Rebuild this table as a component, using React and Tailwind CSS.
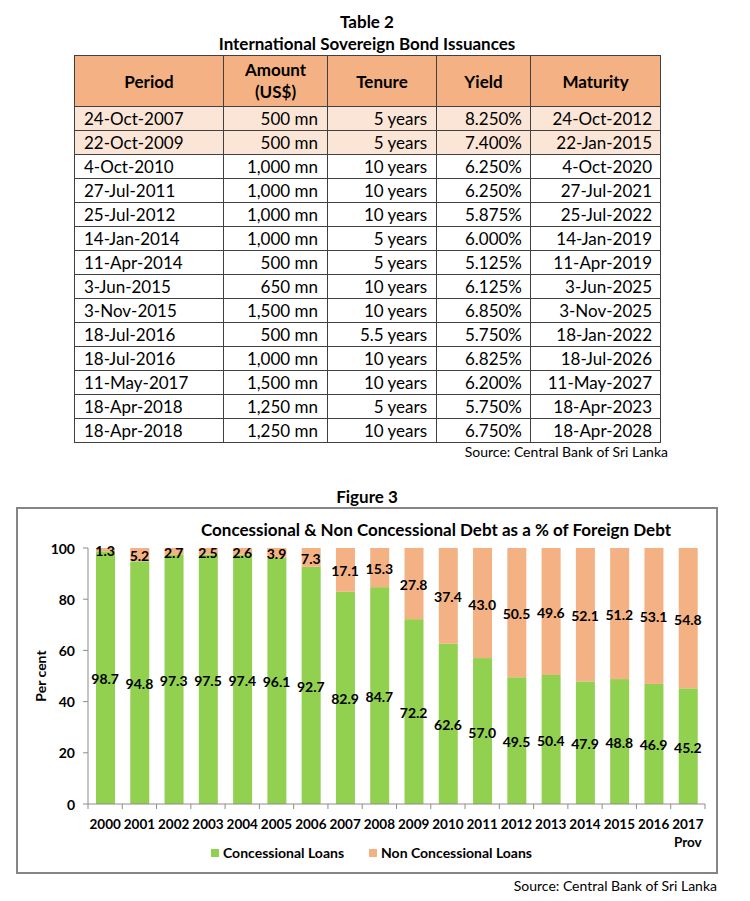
import React from "react";

const rows = [
  ["24-Oct-2007", "500 mn", "5 years", "8.250%", "24-Oct-2012", true],
  ["22-Oct-2009", "500 mn", "5 years", "7.400%", "22-Jan-2015", true],
  ["4-Oct-2010", "1,000 mn", "10 years", "6.250%", "4-Oct-2020"],
  ["27-Jul-2011", "1,000 mn", "10 years", "6.250%", "27-Jul-2021"],
  ["25-Jul-2012", "1,000 mn", "10 years", "5.875%", "25-Jul-2022"],
  ["14-Jan-2014", "1,000 mn", "5 years", "6.000%", "14-Jan-2019"],
  ["11-Apr-2014", "500 mn", "5 years", "5.125%", "11-Apr-2019"],
  ["3-Jun-2015", "650 mn", "10 years", "6.125%", "3-Jun-2025"],
  ["3-Nov-2015", "1,500 mn", "10 years", "6.850%", "3-Nov-2025"],
  ["18-Jul-2016", "500 mn", "5.5 years", "5.750%", "18-Jan-2022"],
  ["18-Jul-2016", "1,000 mn", "10 years", "6.825%", "18-Jul-2026"],
  ["11-May-2017", "1,500 mn", "10 years", "6.200%", "11-May-2027"],
  ["18-Apr-2018", "1,250 mn", "5 years", "5.750%", "18-Apr-2023"],
  ["18-Apr-2018", "1,250 mn", "10 years", "6.750%", "18-Apr-2028"],
];

const bars = [
  ["2000", "98.7", "1.3"],
  ["2001", "94.8", "5.2"],
  ["2002", "97.3", "2.7"],
  ["2003", "97.5", "2.5"],
  ["2004", "97.4", "2.6"],
  ["2005", "96.1", "3.9"],
  ["2006", "92.7", "7.3"],
  ["2007", "82.9", "17.1"],
  ["2008", "84.7", "15.3"],
  ["2009", "72.2", "27.8"],
  ["2010", "62.6", "37.4"],
  ["2011", "57.0", "43.0"],
  ["2012", "49.5", "50.5"],
  ["2013", "50.4", "49.6"],
  ["2014", "47.9", "52.1"],
  ["2015", "48.8", "51.2"],
  ["2016", "46.9", "53.1"],
  ["2017", "45.2", "54.8"],
];

const GREEN = "#92D050";
const ORANGE = "#F4B183";

function Chart() {
  const x0 = 70;
  const x1 = 687;
  const base = 267;
  const k = 2.56;
  const catW = (x1 - x0) / bars.length;
  const y = (v) => base - k * v;
  return (
    <svg width="698" height="309" className="block overflow-visible font-['Lato'] text-[14px] font-bold">
      {[0, 20, 40, 60, 80, 100].map((v) => (
        <g key={v}>
          <line x1={65} x2={x0} y1={y(v)} y2={y(v)} stroke="#8c8c8c" strokeWidth="1" />
          <text x={57} y={y(v)} textAnchor="end" dominantBaseline="central" fill="#000">
            {v}
          </text>
        </g>
      ))}
      <text
        x={22}
        y={139}
        transform="rotate(-90 22 139)"
        textAnchor="middle"
        dominantBaseline="central"
        fill="#000"
      >
        Per cent
      </text>
      {bars.map(([yr, g, o], i) => {
        const bx = x0 + i * catW + 8;
        const cx = x0 + (i + 0.5) * catW;
        const gv = parseFloat(g);
        const ov = parseFloat(o);
        return (
          <g key={yr}>
            <rect x={bx} y={y(gv)} width={19} height={k * gv} fill={GREEN} />
            <rect x={bx} y={y(100)} width={19} height={k * ov} fill={ORANGE} />
            <text x={cx} y={y(gv / 2) + 1} textAnchor="middle" dominantBaseline="central" fill="#000">
              {g}
            </text>
            <text x={cx} y={y(100 - ov / 2) + 1} textAnchor="middle" dominantBaseline="central" fill="#000">
              {o}
            </text>
            <text x={cx} y={287} textAnchor="middle" dominantBaseline="central" fill="#000" className="text-[13.5px]">
              {yr}
            </text>
          </g>
        );
      })}
      <text x={x0 + 17.5 * catW} y={305} textAnchor="middle" dominantBaseline="central" fill="#000" className="text-[13.5px]">
        Prov
      </text>
      {Array.from({ length: bars.length + 1 }).map((_, i) => (
        <line
          key={i}
          x1={x0 + i * catW}
          x2={x0 + i * catW}
          y1={base}
          y2={base + 5}
          stroke="#8c8c8c"
          strokeWidth="1"
        />
      ))}
      <line x1={x0} x2={x0} y1={y(100)} y2={base} stroke="#8c8c8c" strokeWidth="1" />
      <line x1={x0} x2={x1} y1={base} y2={base} stroke="#8c8c8c" strokeWidth="1" />
    </svg>
  );
}

export default function App() {
  return (
    <div className="w-[750px] h-[901px] bg-white text-black font-['Lato',sans-serif] overflow-hidden">
      <div className="ml-[74px] w-[594px]">
        <div className="w-[586px] pt-[11px] text-center font-bold text-[17px] leading-[22px]">
          <div>Table 2</div>
          <div>International Sovereign Bond Issuances</div>
        </div>
        <table className="w-[586px] border-collapse table-fixed text-[17px] leading-none">
          <colgroup>
            <col className="w-[149px]" />
            <col className="w-[104px]" />
            <col className="w-[109px]" />
            <col className="w-[94px]" />
            <col className="w-[130px]" />
          </colgroup>
          <thead>
            <tr className="h-[51px] bg-[#F4B183] font-bold">
              <th className="border border-[#404040] text-center">Period</th>
              <th className="border border-[#404040] text-center leading-[22px]">
                Amount
                <br />
                (US$)
              </th>
              <th className="border border-[#404040] text-center">Tenure</th>
              <th className="border border-[#404040] text-center">Yield</th>
              <th className="border border-[#404040] text-center">Maturity</th>
            </tr>
          </thead>
          <tbody>
            {rows.map((r, i) => (
              <tr key={i} className={`h-[24px] ${r[5] ? "bg-[#FBE5D6]" : "bg-white"}`}>
                <td className="border border-[#404040] pl-[9px] text-left">{r[0]}</td>
                <td className="border border-[#404040] pr-[9px] text-right">{r[1]}</td>
                <td className="border border-[#404040] pr-[9px] text-right">{r[2]}</td>
                <td className="border border-[#404040] pr-[8px] text-right">{r[3]}</td>
                <td className="border border-[#404040] pr-[8px] text-right">{r[4]}</td>
              </tr>
            ))}
          </tbody>
        </table>
        <div className="flex justify-end text-[14px] leading-[18px]">Source: Central Bank of Sri Lanka</div>
        <div className="w-[586px] mt-[25px] text-center font-bold text-[17px] leading-[21px]">Figure 3</div>
      </div>
      <div className="ml-[16px] w-[702px] h-[367px] border-2 border-[#858585] flex flex-col">
        <div className="h-[28px] pt-[9px] pl-[138px] flex justify-center font-bold text-[17px] leading-[24px]">
          Concessional &amp; Non Concessional Debt as a % of Foreign Debt
        </div>
        <Chart />
        <div className="flex items-center pl-[193px] text-[14px] font-bold leading-[14px] h-[14px]">
          <span className="w-[8px] h-[8px] bg-[#92D050] mr-[4px]" />
          <span>Concessional Loans</span>
          <span className="w-[8px] h-[8px] bg-[#F4B183] ml-[25px] mr-[4px]" />
          <span>Non Concessional Loans</span>
        </div>
      </div>
      <div className="flex justify-end pr-[33px] mt-[3px] text-[14px] leading-[18px]">
        Source: Central Bank of Sri Lanka
      </div>
    </div>
  );
}
